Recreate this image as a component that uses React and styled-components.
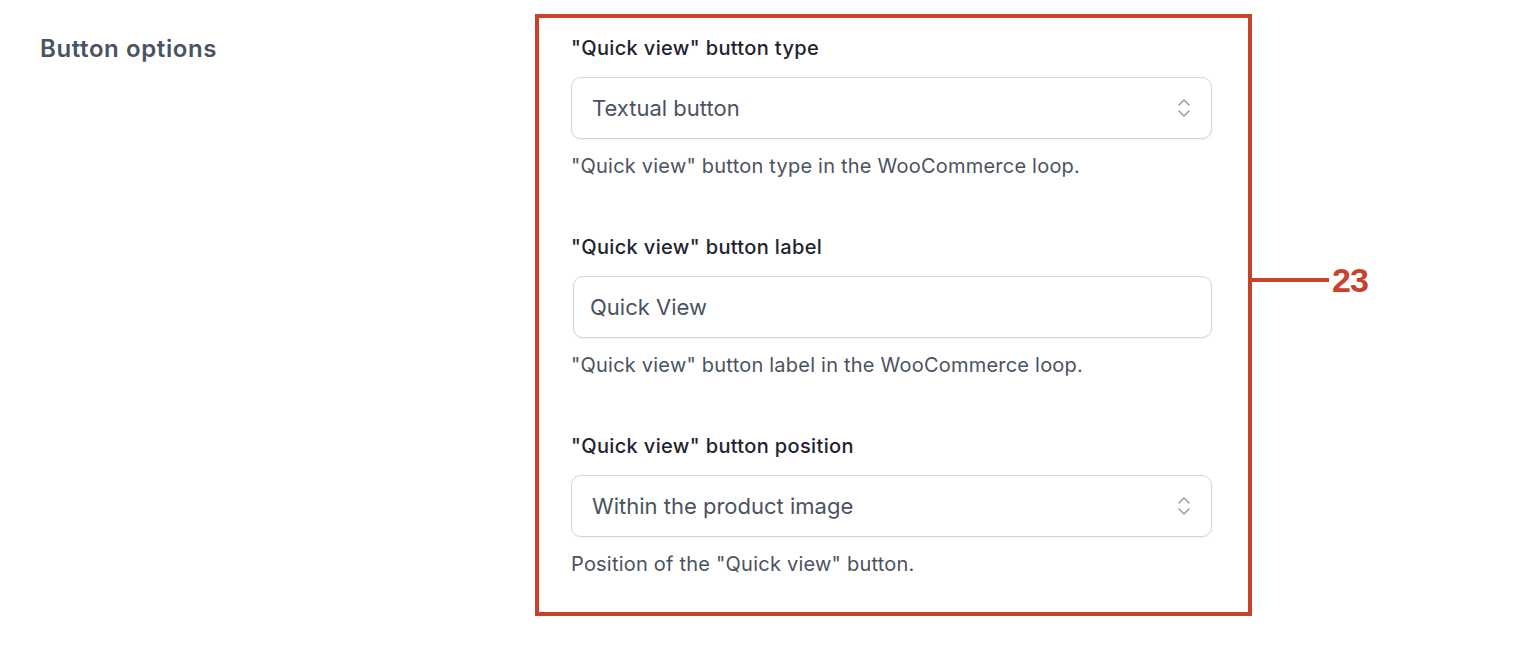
import React from "react";
import styled, { createGlobalStyle } from "styled-components";

const GlobalStyle = createGlobalStyle`
  html, body {
    margin: 0;
    padding: 0;
    background: #ffffff;
  }
  body {
    font-family: Inter, "Noto Sans", sans-serif;
    -webkit-font-smoothing: antialiased;
  }
`;

const Page = styled.div`
  display: grid;
  grid-template-columns: 495px 717px;
  padding: 14px 0 0 40px;
  align-items: start;
`;

const SectionTitle = styled.h2`
  margin: 20px 0 0;
  font-size: 24px;
  line-height: 30px;
  font-weight: 600;
  letter-spacing: 0.6px;
  color: #4a5361;
`;

const Highlight = styled.div`
  position: relative;
  border: 4px solid #c9412b;
  padding: 16px 36px 34px 32px;
  display: flex;
  flex-direction: column;
  gap: 53px;
`;

const Callout = styled.div`
  position: absolute;
  left: 100%;
  top: 243px;
  display: flex;
  align-items: center;
  height: 38px;
`;

const CalloutLine = styled.span`
  width: 81px;
  height: 4px;
  background: #c9412b;
`;

const CalloutNumber = styled.span`
  font-family: "Liberation Sans", Arial, sans-serif;
  font-weight: 700;
  font-size: 34px;
  line-height: 38px;
  color: #c9412b;
  margin-left: 3px;
  letter-spacing: -1px;
`;

const Field = styled.div`
  display: flex;
  flex-direction: column;
`;

const Label = styled.label`
  font-size: 20px;
  line-height: 28px;
  font-weight: 500;
  letter-spacing: 0.35px;
  color: #1d2430;
  margin-bottom: 15px;
`;

const Control = styled.div`
  box-sizing: border-box;
  height: 62px;
  margin-left: ${(p) => p.$offset || 0}px;
  border: 1px solid #d3d7dd;
  border-radius: 10px;
  box-shadow: 0 1px 2px rgba(17, 24, 39, 0.06);
  display: flex;
  align-items: center;
  justify-content: space-between;
  padding: 0 20px 0 ${(p) => (p.$select ? 20 : 16)}px;
  font-size: 22px;
  color: #4a5361;
  background: #fff;
`;

const Help = styled.p`
  margin: 13px 0 0;
  font-size: 20px;
  line-height: 28px;
  letter-spacing: 0.22px;
  color: #4a5361;
`;

function UpDown() {
  return (
    <svg width="14" height="22" viewBox="0 0 14 22" fill="none" stroke="#9aa1ab" strokeWidth="1.6" strokeLinecap="round" strokeLinejoin="round">
      <path d="M2 8 L7 3 L12 8" />
      <path d="M2 14 L7 19 L12 14" />
    </svg>
  );
}

const fields = [
  {
    label: '"Quick view" button type',
    value: "Textual button",
    help: '"Quick view" button type in the WooCommerce loop.',
    select: true,
  },
  {
    label: '"Quick view" button label',
    value: "Quick View",
    help: '"Quick view" button label in the WooCommerce loop.',
    select: false,
  },
  {
    label: '"Quick view" button position',
    value: "Within the product image",
    help: 'Position of the "Quick view" button.',
    select: true,
  },
];

export default function App() {
  return (
    <>
      <GlobalStyle />
      <Page>
        <SectionTitle>Button options</SectionTitle>
        <Highlight>
          {fields.map((f) => (
            <Field key={f.label}>
              <Label>{f.label}</Label>
              <Control $select={f.select} $offset={f.select ? 0 : 2}>
                <span>{f.value}</span>
                {f.select && <UpDown />}
              </Control>
              <Help>{f.help}</Help>
            </Field>
          ))}
          <Callout>
            <CalloutLine />
            <CalloutNumber>23</CalloutNumber>
          </Callout>
        </Highlight>
      </Page>
    </>
  );
}
